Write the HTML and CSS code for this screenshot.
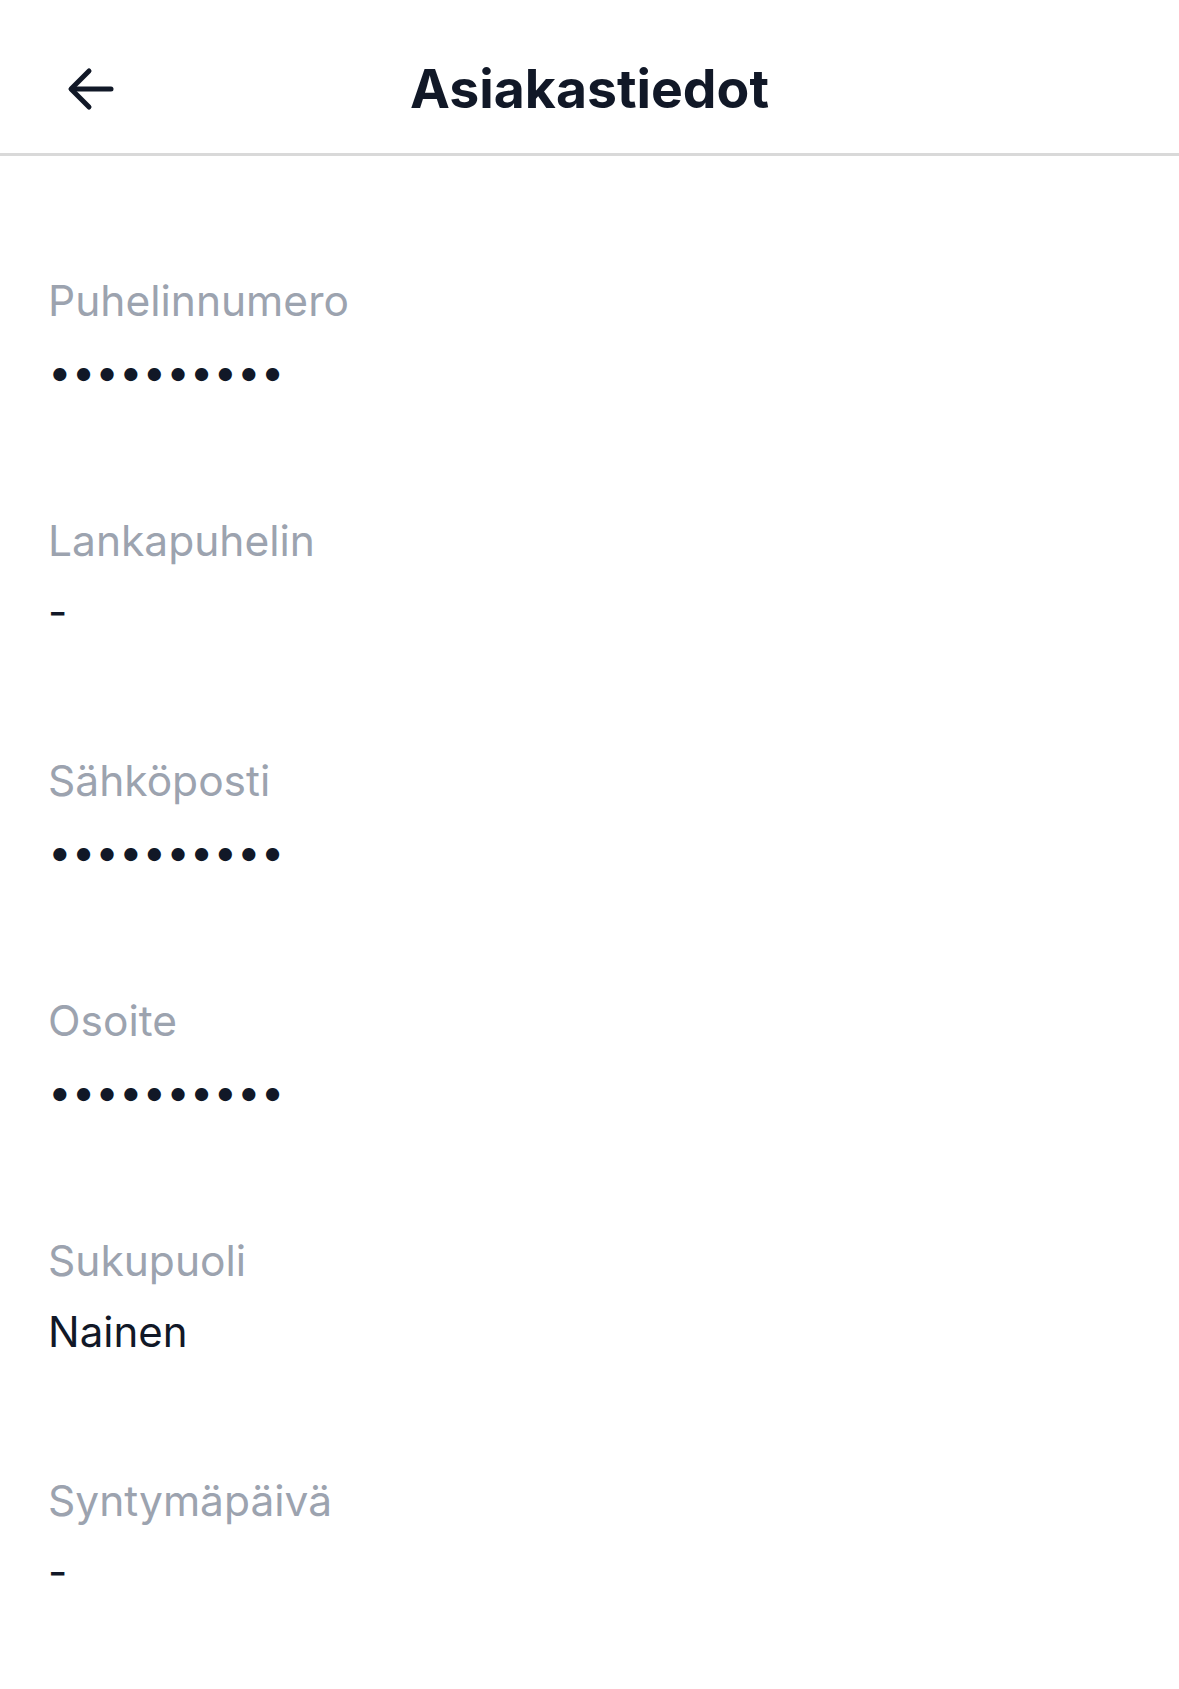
FILE: index.html
```html
<!DOCTYPE html>
<html lang="fi">
<head>
    <meta charset="UTF-8">
    <meta name="viewport" content="width=device-width, initial-scale=1.0">
    <title>Asiakastiedot</title>
    <link rel="stylesheet" href="styles.css">
</head>
<body>
    <header class="topBar">
        <button class="backButton" aria-label="Takaisin">
            <svg width="48" height="48" viewBox="0 0 48 48" fill="none" stroke="#111827" stroke-width="5" stroke-linecap="round" stroke-linejoin="round">
                <path d="M44 24H5"/>
                <path d="M22 6L4 24L22 42"/>
            </svg>
        </button>
        <h1 class="pageTitle">Asiakastiedot</h1>
        <span></span>
    </header>

    <main class="details">
        <div class="field">
            <div class="fieldLabel">Puhelinnumero</div>
            <div class="fieldValue">••••••••••</div>
        </div>
        <div class="field">
            <div class="fieldLabel">Lankapuhelin</div>
            <div class="fieldValue">-</div>
        </div>
        <div class="field">
            <div class="fieldLabel">Sähköposti</div>
            <div class="fieldValue">••••••••••</div>
        </div>
        <div class="field">
            <div class="fieldLabel">Osoite</div>
            <div class="fieldValue">••••••••••</div>
        </div>
        <div class="field">
            <div class="fieldLabel">Sukupuoli</div>
            <div class="fieldValue">Nainen</div>
        </div>
        <div class="field">
            <div class="fieldLabel">Syntymäpäivä</div>
            <div class="fieldValue">-</div>
        </div>
    </main>
</body>
</html>
```

FILE: styles.css
```css
body {
    font-family: Inter, "Noto Sans", sans-serif;
    margin: 0;
    padding: 0;
    background-color: #ffffff;
    color: #111827;
}

.topBar {
    display: grid;
    grid-template-columns: 1fr auto 1fr;
    align-items: center;
    height: 129px;
    padding-top: 24px;
    border-bottom: 3px solid #d9d9d9;
}

.backButton {
    justify-self: start;
    margin-left: 67px;
    padding: 0;
    background: none;
    border: none;
    display: flex;
    cursor: pointer;
}

.pageTitle {
    margin: 0;
    font-size: 53.5px;
    font-weight: 700;
    line-height: 1;
}

.details {
    padding: 115px 48px 0;
}

.field {
    margin-bottom: 109px;
}

.fieldLabel {
    font-size: 42.5px;
    line-height: 60px;
    color: #9ca3af;
    margin-bottom: 11px;
}

.fieldValue {
    font-size: 42px;
    line-height: 60px;
    color: #111827;
}
```
